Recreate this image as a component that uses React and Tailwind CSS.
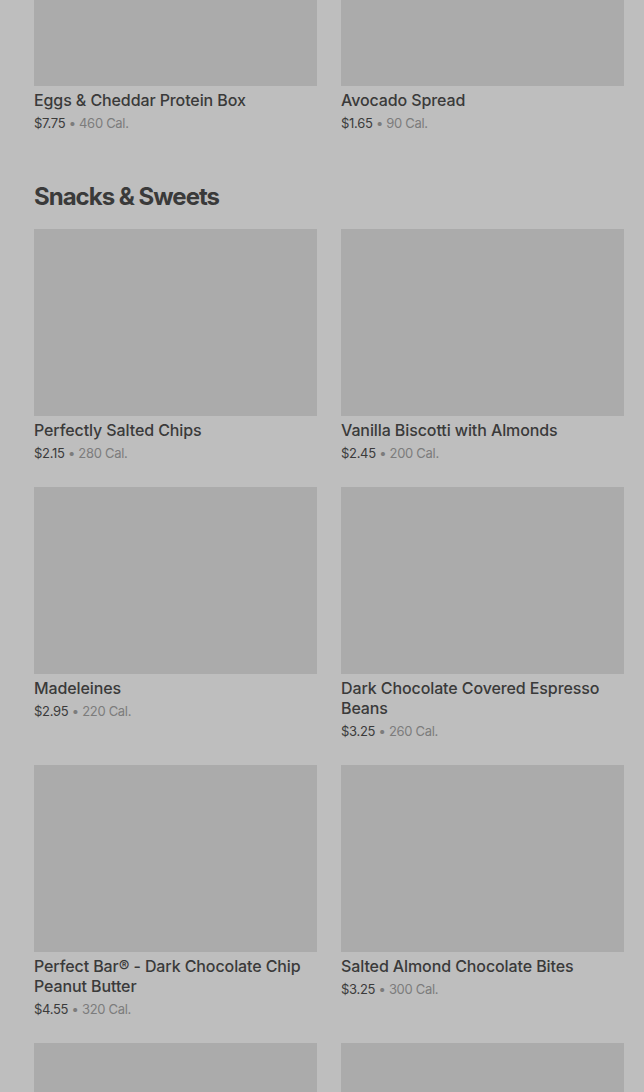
import React from "react";

const font = { fontFamily: "Inter, 'Noto Sans', sans-serif" };

function Card({ name, price, cal }) {
  return (
    <div className="flex flex-col">
      <div className="h-[187px] w-full bg-[#ababab]" />
      <div className="mt-[4px] text-[16px] leading-[20px] font-medium text-[#3a3a3a] tracking-[-0.1px]">{name}</div>
      <div className="mt-[4px] text-[13px] leading-[18px] text-[#3b3b3b] tracking-[-0.3px]">
        {price} <span className="text-[#7c7c7c]">• {cal} Cal.</span>
      </div>
    </div>
  );
}

const snacks = [
  ["Perfectly Salted Chips", "$2.15", "280"],
  ["Vanilla Biscotti with Almonds", "$2.45", "200"],
  ["Madeleines", "$2.95", "220"],
  ["Dark Chocolate Covered Espresso Beans", "$3.25", "260"],
  ["Perfect Bar® - Dark Chocolate Chip Peanut Butter", "$4.55", "320"],
  ["Salted Almond Chocolate Bites", "$3.25", "300"],
];

export default function App() {
  return (
    <div className="min-h-[1092px] h-[1092px] overflow-hidden bg-[#bebebe] pl-[34px] pr-[20px]" style={font}>
      <div className="grid grid-cols-2 gap-x-[24px] mt-[-101px]">
        <Card name="Eggs & Cheddar Protein Box" price="$7.75" cal="460" />
        <Card name="Avocado Spread" price="$1.65" cal="90" />
      </div>
      <h2 className="mt-[49px] mb-[16px] text-[24px] leading-[32px] font-bold text-[#3a3a3a] tracking-[-1px]">Snacks &amp; Sweets</h2>
      <div className="grid grid-cols-2 gap-x-[24px] gap-y-[25px]">
        {snacks.map(([n, p, c]) => (
          <Card key={n} name={n} price={p} cal={c} />
        ))}
        <div className="h-[187px] bg-[#ababab]" />
        <div className="h-[187px] bg-[#ababab]" />
      </div>
    </div>
  );
}
